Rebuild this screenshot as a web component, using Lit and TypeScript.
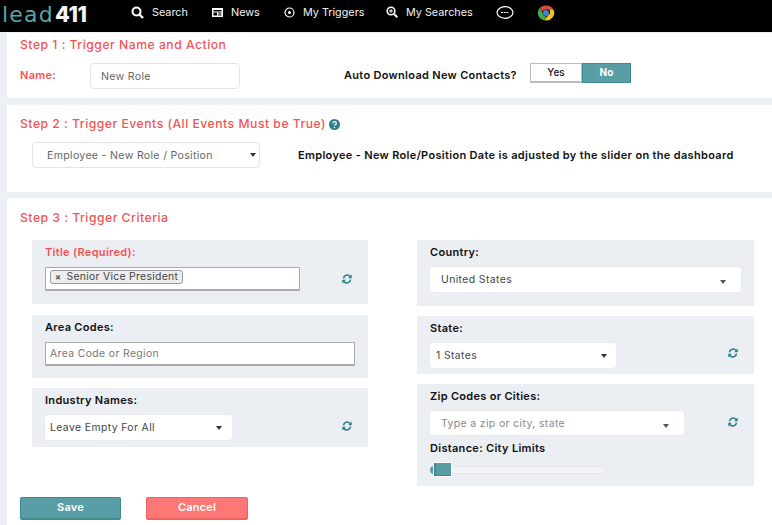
import { LitElement, html, css } from "lit";
import { customElement } from "lit/decorators.js";

const refresh = html`<svg class="refresh" viewBox="0 0 16 16"><path d="M2.3 7A5.9 5.9 0 0 1 12.6 3.6L14.3 2V7H9.4L11.2 5.2A3.8 3.8 0 0 0 4.4 7.2Z"/><path d="M13.7 9A5.9 5.9 0 0 1 3.4 12.4L1.7 14V9H6.6L4.8 10.8A3.8 3.8 0 0 0 11.6 8.8Z"/></svg>`;
const caret = html`<span class="caret"></span>`;

@customElement("app-root")
export class AppRoot extends LitElement {
  static styles = css`
    :host { display: block; width: 772px; height: 525px; overflow: hidden; background: #eceff4; font-family: "Inter", "Liberation Sans", sans-serif; font-size: 11px; color: #111; }
    * { box-sizing: border-box; }
    header { height: 32px; background: #000; display: flex; align-items: center; color: #f2f2f2; font-size: 10.8px; margin-bottom: 1px; }
    .logo { font-family: "Inter", sans-serif; font-size: 21.5px; line-height: 24px; width: 131px; padding-left: 2px; margin-top: -4px; color: #f4f4f4; font-weight: 800; white-space: nowrap; letter-spacing: -0.3px; }
    .logo span { font-family: "DejaVu Sans", sans-serif; font-size: 22px; color: #5ba3aa; font-weight: 400; letter-spacing: 1.2px; margin-right: 1px; }
    .nav { display: flex; align-items: center; margin-top: -8px; }
    .nav svg { display: block; fill: none; stroke: #fff; }
    .nav .lbl { margin-left: 8px; }
    .n1 { width: 81px; } .n2 { width: 72px; } .n3 { width: 102px; } .n4 { width: 110px; } .n5 { width: 41px; }
    .panel { background: #fff; margin-left: 7px; position: relative; }
    .p1 { height: 65px; padding: 5px 13px 0; margin-bottom: 7px; }
    .p2 { height: 87px; padding: 12px 13px 0; margin-bottom: 6px; }
    .p3 { height: 327px; padding: 13px 13px 0; }
    h2 { margin: 0; font-size: 12.2px; font-weight: 500; line-height: 14px; color: #f55353; letter-spacing: .5px; white-space: nowrap; }
    .row1 { display: flex; align-items: flex-start; margin-top: 11px; }
    .name-lbl { color: #f55353; font-weight: 600; font-size: 11px; letter-spacing: .3px; width: 70px; margin-top: 5px; }
    .input { border: 1px solid #e2e4e8; border-radius: 4px; background: #fff; color: #666; display: flex; align-items: center; }
    .name-in { width: 150px; height: 26px; padding-left: 10px; font-size: 10.6px; letter-spacing: .3px; }
    .auto { font-weight: 600; font-size: 11px; letter-spacing: .3px; margin-left: 104px; width: 186px; margin-top: 5px; white-space: nowrap; }
    .toggle { display: flex; height: 20px; font-weight: 500; font-size: 10px; }
    .toggle div { width: 52px; display: flex; align-items: center; justify-content: center; padding-bottom: 2px; }
    .yes { border: 1px solid #bbb; border-bottom-width: 2px; }
    .no { background: #5a9ea5; color: #fff; border: 1px solid #3f8a92; width: 49px !important; font-weight: 700; }
    .row2 { display: flex; align-items: flex-start; margin-top: 11px; padding-left: 12px; }
    .ev { width: 228px; height: 26px; padding: 0 3px 0 14px; justify-content: space-between; font-size: 10.6px; letter-spacing: .3px; }
    .caret { width: 0; height: 0; border: 3px solid transparent; border-top: 4px solid #333; border-bottom: 0; flex: none; }
    .ev-text { margin-left: 38px; margin-top: 6px; font-weight: 600; font-size: 11px; letter-spacing: .32px; white-space: nowrap; }
    .help { display: inline-block; vertical-align: -2px; margin-left: 3px; }
    .cols { display: grid; grid-template-columns: 336px 337px; column-gap: 49px; margin-top: 15px; padding-left: 12px; }
    .col { display: flex; flex-direction: column; }
    .box { background: #ebeef3; padding: 6px 13px 0; position: relative; display: flex; flex-direction: column; align-items: flex-start; }
    .box label { font-weight: 600; font-size: 11px; letter-spacing: .3px; line-height: 13px; }
    .box .req { color: #f55353; }
    .refresh { position: absolute; right: 15px; width: 12px; height: 12px; fill: #2f7f88; }
    .b1 { height: 64px; margin-bottom: 11px; } .b1 .refresh { top: 33px; }
    .b2 { height: 63px; margin-bottom: 10px; }
    .b3 { height: 59px; } .b3 .refresh { top: 32px; }
    .b4 { height: 66px; margin-bottom: 10px; }
    .b5 { height: 58px; margin-bottom: 10px; } .b5 .refresh { top: 31px; }
    .b6 { height: 102px; } .b6 .refresh { top: 32px; }
    .tag-in { width: 255px; height: 24px; margin-top: 8px; border: 1px solid #aaa; border-bottom-width: 2px; border-radius: 1px; background: #fff; padding: 2px 4px; display: flex; align-items: flex-start; }
    .tag { height: 14px; border: 1px solid #999; border-radius: 3px; background: #ededed; padding: 0 4px 1px; display: flex; align-items: center; gap: 5px; font-size: 10.4px; letter-spacing: .3px; color: #444; }
    .x { font-size: 9px; font-weight: 700; color: #555; line-height: 10px; }
    .plain { width: 310px; height: 24px; margin-top: 8px; border: 1px solid #aaa; border-bottom-width: 2px; border-radius: 1px; background: #fff; padding: 0 4px; display: flex; align-items: center; color: #777; font-size: 10.4px; letter-spacing: .38px; }
    .sel { height: 25px; margin-top: 8px; background: #fff; border-radius: 3px; box-shadow: 0 0 1px #d5d8de; display: flex; align-items: center; justify-content: space-between; font-size: 10.4px; letter-spacing: .4px; color: #444; padding: 0 10px 0 5px; }
    .w187 { width: 187px; } .w186 { width: 186px; padding-left: 6px; padding-right: 9px; }
    .country { width: 311px; height: 25px; padding: 0 15px 0 11px; }
    .country .caret, .zip .caret { border-top-color: #555; margin-top: 5px; }
    .zip { width: 254px; height: 24px; padding: 0 15px 0 11px; color: #888; }
    .box .dist { margin-top: 7px; }
    .slider { width: 176px; height: 8px; margin-top: 11px; border-radius: 4px; background: #f3f4f5; border: 1px solid #e6e7ea; position: relative; }
    .handle { position: absolute; left: 3px; top: -4px; width: 17px; height: 13px; background: #5a9ea5; border-left: 2px solid #3f8a92; border-bottom: 1px solid #3f8a92; box-shadow: 0 0 0 1px #fff; }
    .dot { position: absolute; left: -1px; top: -1px; width: 7px; height: 8px; border-radius: 4px 0 0 4px; background: #5a9ea5; }
    .btns { display: flex; gap: 25px; margin-top: 11px; }
    button { width: 102px; height: 23px; font: 600 11px "Inter", sans-serif; letter-spacing: .2px; color: #fff; border-radius: 2px; padding: 0 0 2px; }
    .save { width: 101px; background: #5a9ea5; border: 1px solid #3f8a92; border-bottom-width: 2px; }
    .cancel { background: #fd7777; border: 1px solid #f06060; border-bottom-width: 2px; }
    .mt0 { margin-top: 0; } .mt1 { margin-top: 1px; }
  `;

  render() {
    return html`
      <header>
        <div class="logo"><span>lead</span>411</div>
        <div class="nav">
          <div class="nav n1 mt0">
            <svg width="13" height="13" viewBox="0 0 13 13"><circle cx="5.5" cy="5.5" r="4" stroke-width="2"/><path d="M8.5 8.5L12 12" stroke-width="2.4"/></svg>
            <span class="lbl">Search</span>
          </div>
          <div class="nav n2 mt1">
            <svg width="11" height="9" viewBox="0 0 11 9"><path fill="#fff" stroke="none" d="M0 0H11V9H0ZM1.5 2V3.5H9.5V2ZM1.5 4.5V7.5H5V4.5ZM6 4.5V5.5H9.5V4.5ZM6 6.5V7.5H9.5V6.5Z" fill-rule="evenodd"/></svg>
            <span class="lbl">News</span>
          </div>
          <div class="nav n3 mt1">
            <svg width="11" height="11" viewBox="0 0 11 11"><circle cx="5.5" cy="5.5" r="4.5" stroke-width="1.2"/><circle cx="5.5" cy="5.5" r="1.5" fill="#fff" stroke="none"/></svg>
            <span class="lbl">My Triggers</span>
          </div>
          <div class="nav n4 mt0">
            <svg width="12" height="12" viewBox="0 0 12 12"><circle cx="5" cy="5" r="3.8" stroke-width="1.6"/><path d="M8 8L11.3 11.3" stroke-width="2"/><path d="M3 5H7M5 3V7" stroke-width="1"/></svg>
            <span class="lbl">My Searches</span>
          </div>
          <div class="nav n5 mt1">
            <svg width="18" height="13" viewBox="0 0 18 13"><ellipse cx="9" cy="6.5" rx="8" ry="5.8" stroke-width="1.2"/><path d="M5 6.5H13" stroke-width="1.2" stroke-dasharray="2 .7"/></svg>
          </div>
          <svg class="mt1" width="18" height="16" viewBox="0 0 18 16" style="stroke:none">
            <path fill="#dd4b3e" d="M9 0.5A8 7.5 0 0 1 16.3 4.5H9A3.6 3.6 0 0 0 5.6 6.6L3 2.8A8 7.5 0 0 1 9 0.5Z"/>
            <path fill="#4ba84f" d="M3 2.8L5.8 8.5A3.6 3.6 0 0 0 9.3 11.5L7.4 15.3A8 7.5 0 0 1 3 2.8Z"/>
            <path fill="#f5c518" d="M16.3 4.5A8 7.5 0 0 1 7.4 15.3L10.8 10.6A3.6 3.6 0 0 0 11.8 4.5Z"/>
            <circle cx="9" cy="8" r="3" fill="#4a80d8"/>
          </svg>
        </div>
      </header>

      <section class="panel p1">
        <h2>Step 1 : Trigger Name and Action</h2>
        <div class="row1">
          <div class="name-lbl">Name:</div>
          <div class="input name-in">New Role</div>
          <div class="auto">Auto Download New Contacts?</div>
          <div class="toggle"><div class="yes">Yes</div><div class="no">No</div></div>
        </div>
      </section>

      <section class="panel p2">
        <h2>Step 2 : Trigger Events (All Events Must be True)<svg class="help" width="11" height="11" viewBox="0 0 11 11"><circle cx="5.5" cy="5.5" r="5.5" fill="#2f7f88"/><path d="M3.8 4.2A1.8 1.6 0 1 1 6 5.7C5.6 6 5.5 6.2 5.5 6.8" fill="none" stroke="#fff" stroke-width="1.2"/><circle cx="5.5" cy="8.5" r=".8" fill="#fff"/></svg></h2>
        <div class="row2">
          <div class="input ev">Employee - New Role / Position ${caret}</div>
          <div class="ev-text">Employee - New Role/Position Date is adjusted by the slider on the dashboard</div>
        </div>
      </section>

      <section class="panel p3">
        <h2>Step 3 : Trigger Criteria</h2>
        <div class="cols">
          <div class="col">
            <div class="box b1">
              <label class="req">Title (Required):</label>
              <div class="tag-in"><div class="tag"><span class="x">×</span>Senior Vice President</div></div>
              ${refresh}
            </div>
            <div class="box b2">
              <label>Area Codes:</label>
              <div class="plain">Area Code or Region</div>
            </div>
            <div class="box b3">
              <label>Industry Names:</label>
              <div class="sel w187">Leave Empty For All ${caret}</div>
              ${refresh}
            </div>
          </div>
          <div class="col">
            <div class="box b4">
              <label>Country:</label>
              <div class="sel country">United States ${caret}</div>
            </div>
            <div class="box b5">
              <label>State:</label>
              <div class="sel w186">1 States ${caret}</div>
              ${refresh}
            </div>
            <div class="box b6">
              <label>Zip Codes or Cities:</label>
              <div class="sel zip">Type a zip or city, state ${caret}</div>
              <label class="dist">Distance: City Limits</label>
              <div class="slider"><span class="dot"></span><span class="handle"></span></div>
              ${refresh}
            </div>
          </div>
        </div>
        <div class="btns"><button class="save">Save</button><button class="cancel">Cancel</button></div>
      </section>
    `;
  }
}
